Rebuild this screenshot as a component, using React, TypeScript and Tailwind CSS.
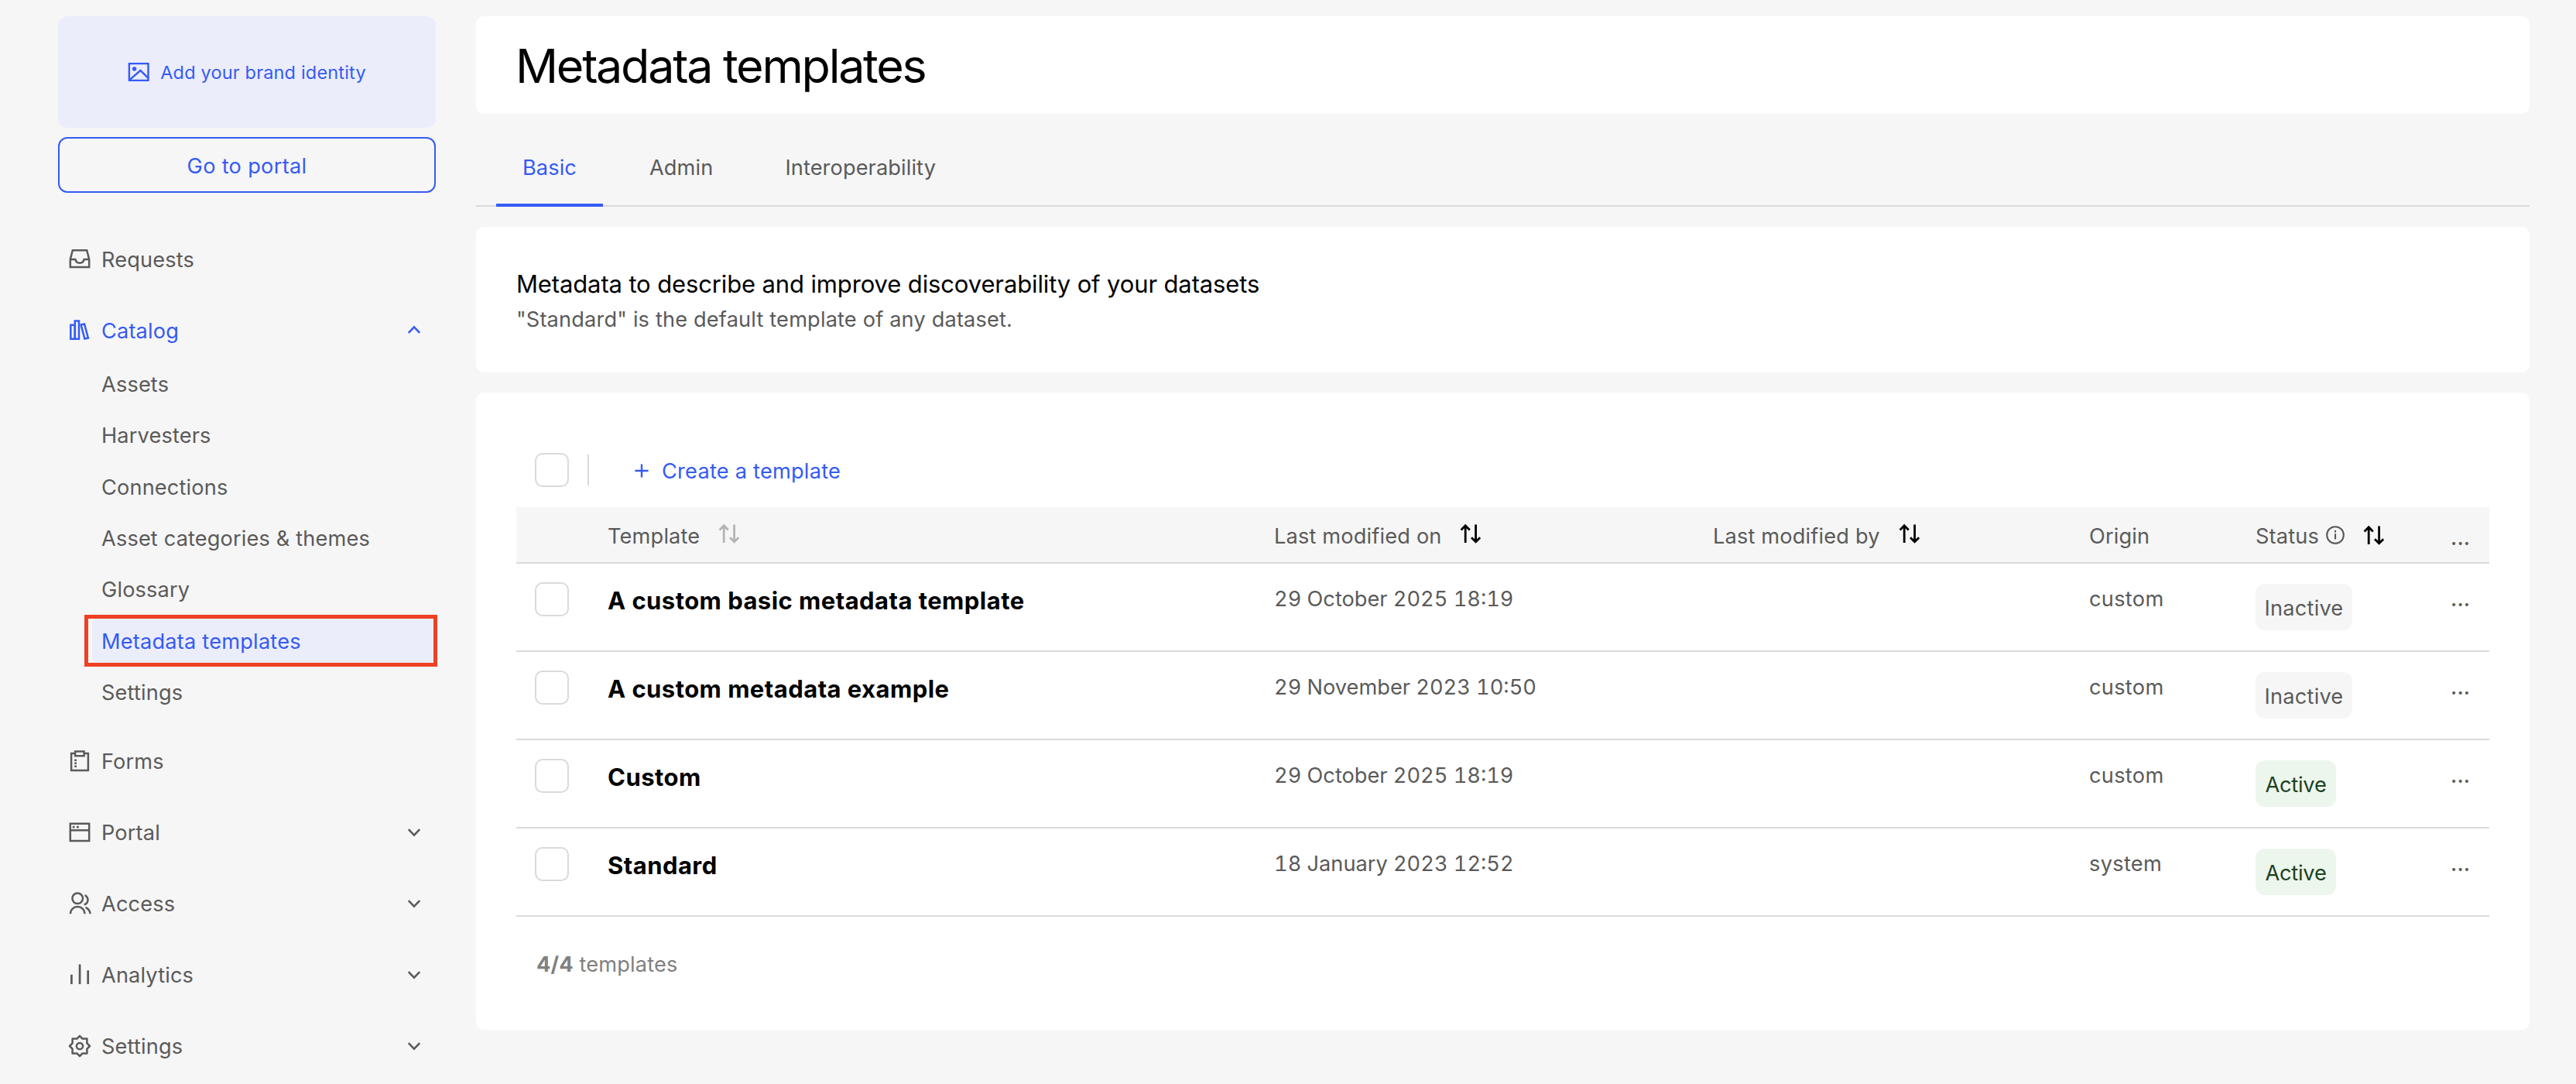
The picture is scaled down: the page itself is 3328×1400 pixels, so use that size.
import { ReactNode } from 'react';

interface NavEntry {
  label: string;
  icon: ReactNode;
  expandable?: boolean;
}

interface Template {
  name: string;
  modifiedOn: string;
  origin: string;
  active: boolean;
}

function Icon({ children }: { children: ReactNode }) {
  return (
    <svg className="-mt-1 h-8 w-8 shrink-0" viewBox="0 0 32 32" fill="none" stroke="currentColor" strokeWidth="2.5">
      {children}
    </svg>
  );
}

function InboxIcon() {
  return (
    <Icon>
      <path d="M6.8 5.2H25.2L28.2 17V27H3.8V17Z" />
      <path d="M3.8 17H10.4C11 20 13.2 21.7 16 21.7S21 20 21.6 17H28.2" />
    </Icon>
  );
}

function CatalogIcon() {
  return (
    <Icon>
      <path d="M4.3 9.7H9.8V27.7H4.3Z" />
      <path d="M9.8 4.4H15V27.7H9.8Z" />
      <path d="M17.6 9.4L22 8.4L26.9 26.5L22.4 27.5Z" />
    </Icon>
  );
}

function FormsIcon() {
  return (
    <Icon>
      <path d="M10.1 6.1H5.1V27.9H26.9V6.1H21.6" />
      <path d="M10.1 3.6H21.6V9.2H10.1Z" />
      <path d="M10.6 13.4V24.2" strokeWidth="2.8" strokeDasharray="2.7 1.3" />
    </Icon>
  );
}

function PortalIcon() {
  return (
    <Icon>
      <path d="M3.8 4.8H28.2V26.9H3.8Z" />
      <path d="M3.8 13.3H28.2" />
      <path d="M6.8 9.1H9.5M12 9.1H14.8" strokeWidth="2.6" />
    </Icon>
  );
}

function AccessIcon() {
  return (
    <Icon>
      <circle cx="13.2" cy="9.3" r="6.8" />
      <path d="M3.9 29.3A9.3 9.3 0 0 1 22.5 29.3" />
      <path d="M22.6 5.2C28.2 8.4 27.6 16 21.6 17.4" />
      <path d="M23.6 20.8C27 22.6 29.4 25.8 29.6 29.3" />
    </Icon>
  );
}

function AnalyticsIcon() {
  return (
    <Icon>
      <path d="M5.4 15.7V28M16.1 2.5V28M26.7 10.3V28" strokeWidth="2.7" />
    </Icon>
  );
}

function SettingsIcon() {
  return (
    <Icon>
      <path
        d="M16 3L19.6 6.6H25.4V12.4L29 16L25.4 19.6V25.4H19.6L16 29L12.4 25.4H6.6V19.6L3 16L6.6 12.4V6.6H12.4Z"
        strokeLinejoin="round"
      />
      <circle cx="16" cy="16" r="4.1" />
    </Icon>
  );
}

function ImageIcon() {
  return (
    <svg className="h-7 w-8" viewBox="0 0 32 28" fill="none" stroke="currentColor" strokeWidth="2.4">
      <path d="M3.9 3.1H28.5V24.9H3.9Z" />
      <path d="M4.5 24.2L18.4 12L28.2 21.6" />
      <circle cx="10.6" cy="10" r="2.7" fill="currentColor" stroke="none" />
    </svg>
  );
}

function Chevron({ up = false }: { up?: boolean }) {
  return (
    <svg className="-mt-1 ml-auto h-6 w-6" viewBox="0 0 24 24" fill="none" stroke="currentColor" strokeWidth="2.6">
      <path d={up ? 'M4.8 15.8L12 8.4L19.2 15.8' : 'M4.8 8.2L12 15.6L19.2 8.2'} />
    </svg>
  );
}

function SortIcon({ className = '-mt-[7px] text-black' }: { className?: string }) {
  return (
    <svg className={`h-7 w-7 ${className}`} viewBox="0 0 28 28" fill="none" stroke="currentColor" strokeWidth="2.8">
      <path d="M7.2 26V4M1.6 9.4L7.2 3.8L12.8 9.4" />
      <path d="M20.6 2.6V24.6M15 19.2L20.6 24.8L26.2 19.2" />
    </svg>
  );
}

function InfoIcon() {
  return (
    <svg className="-mt-1 h-6 w-6" viewBox="0 0 24 24" fill="none" stroke="currentColor" strokeWidth="2.1">
      <circle cx="12" cy="12" r="10.8" />
      <path d="M12 10.2V17.6M12 6V8.4" />
    </svg>
  );
}

function Checkbox() {
  return <div className="h-11 w-11 rounded-[10px] border-2 border-[#dadada] bg-white"></div>;
}

const catalogPages = [
  'Assets',
  'Harvesters',
  'Connections',
  'Asset categories & themes',
  'Glossary',
  'Metadata templates',
  'Settings',
];

const sections: NavEntry[] = [
  { label: 'Forms', icon: <FormsIcon /> },
  { label: 'Portal', icon: <PortalIcon />, expandable: true },
  { label: 'Access', icon: <AccessIcon />, expandable: true },
  { label: 'Analytics', icon: <AnalyticsIcon />, expandable: true },
  { label: 'Settings', icon: <SettingsIcon />, expandable: true },
];

const templates: Template[] = [
  { name: 'A custom basic metadata template', modifiedOn: '29 October 2025 18:19', origin: 'custom', active: false },
  { name: 'A custom metadata example', modifiedOn: '29 November 2023 10:50', origin: 'custom', active: false },
  { name: 'Custom', modifiedOn: '29 October 2025 18:19', origin: 'custom', active: true },
  { name: 'Standard', modifiedOn: '18 January 2023 12:52', origin: 'system', active: true },
];

const columns = 'grid grid-cols-[118px_861px_567px_486px_215px_252px_1fr]';

function NavRow({ label, icon, expandable }: NavEntry) {
  return (
    <div className="flex h-[92px] items-center gap-3 pr-4 pl-3">
      {icon}
      <span>{label}</span>
      {expandable && <Chevron />}
    </div>
  );
}

function Sidebar() {
  return (
    <aside className="w-[488px] shrink-0">
      <div className="flex h-36 items-center justify-center gap-3 rounded-xl bg-[#ebedfb] pr-[2px] text-[23.5px] tracking-[0.18px] text-[#355bf5]">
        <ImageIcon />
        <span className="pt-[1px]">Add your brand identity</span>
      </div>
      <button className="mt-3 h-[72px] w-full rounded-xl border-2 border-[#355bf5] pt-1 tracking-[0.3px] text-[#355bf5]">
        Go to portal
      </button>

      <nav className="mt-[41px] tracking-[0.14px]">
        <NavRow label="Requests" icon={<InboxIcon />} />
        <div className="flex h-[92px] items-center gap-3 pr-4 pl-3 text-[#355bf5]">
          <CatalogIcon />
          <span>Catalog</span>
          <Chevron up />
        </div>
        <ul className="-mt-[10px] mb-[10px]">
          {catalogPages.map((page) =>
            page === 'Metadata templates' ? (
              <li key={page} className="relative flex h-[66.4px] items-center pl-11 tracking-[0.2px] text-[#355bf5]">
                <div className="-mt-1 flex h-[58px] flex-1 items-center rounded-lg bg-[#ebedfb] pt-1 pl-3">{page}</div>
                <div className="absolute -top-[2px] -right-[2px] left-[34px] h-[67px] border-[5px] border-[#ee4023]"></div>
              </li>
            ) : (
              <li key={page} className="flex h-[66.4px] items-center pl-14">
                {page}
              </li>
            ),
          )}
        </ul>
        {sections.map((section) => (
          <NavRow key={section.label} {...section} />
        ))}
      </nav>
    </aside>
  );
}

function Tabs() {
  return (
    <div className="flex h-[120px] gap-[27px] border-b-2 border-[#dadada] pl-[26px] tracking-[0.1px]">
      <div className="-mb-[2px] flex w-[138px] items-center justify-center border-b-4 border-[#355bf5] pt-6 text-[#355bf5]">
        Basic
      </div>
      <div className="flex items-center px-[33px] pt-[22px]">Admin</div>
      <div className="flex items-center px-[33px] pt-[22px]">Interoperability</div>
    </div>
  );
}

function TemplateRow({ template }: { template: Template }) {
  return (
    <div className={`${columns} h-[114px] border-b-2 border-[#dadada] leading-[44px]`}>
      <div className="pt-6 pl-6">
        <Checkbox />
      </div>
      <div className="pt-[26px] text-[31px] font-bold tracking-[0.45px] text-black">{template.name}</div>
      <div className="pt-6 tracking-[0px] tabular-nums">{template.modifiedOn}</div>
      <div></div>
      <div className="pt-6 tracking-[0.3px]">{template.origin}</div>
      <div className="pt-[26px]">
        {template.active ? (
          <div className="flex h-[60px] w-[104px] items-center justify-center rounded-xl bg-[#ecf6ed] pt-[3px] tracking-[-0.2px] text-[#1c421e]">
            Active
          </div>
        ) : (
          <div className="flex h-[60px] w-[125px] items-center justify-center rounded-xl bg-[#f6f6f6] pt-[3px] tracking-[0.2px]">
            Inactive
          </div>
        )}
      </div>
      <div className="pt-6 font-medium">...</div>
    </div>
  );
}

function TemplateTable() {
  return (
    <section className="mt-[26px] h-[823px] rounded-[10px] bg-white px-[52px] pt-[78px]">
      <div className="flex h-[70px] items-start pl-6">
        <Checkbox />
        <div className="mt-[2px] ml-6 h-10 w-[2px] bg-[#dadada]"></div>
        <button className="ml-14 flex h-12 items-center gap-[14px] tracking-[0.22px] text-[#355bf5]">
          <svg className="-mt-[3px] h-6 w-6" viewBox="0 0 24 24" fill="none" stroke="currentColor" strokeWidth="2.4">
            <path d="M3.4 12H20.6M12 3.4V20.6" />
          </svg>
          <span>Create a template</span>
        </button>
      </div>

      <div className={`${columns} h-[73px] items-center border-b-2 border-[#dadada] bg-[#f6f6f6] pt-[5px] tracking-[0.16px]`}>
        <div></div>
        <div className="flex items-center gap-6">
          Template
          <SortIcon className="-mt-[7px] text-[#b4b4b4]" />
        </div>
        <div className="flex items-center gap-[23px]">
          Last modified on
          <SortIcon />
        </div>
        <div className="flex items-center gap-6">
          Last modified by
          <SortIcon />
        </div>
        <div>Origin</div>
        <div className="flex items-center">
          <span className="mr-[9px]">Status</span>
          <InfoIcon />
          <SortIcon className="-mt-1 ml-6 text-black" />
        </div>
        <div className="pt-1 font-medium">...</div>
      </div>

      {templates.map((template) => (
        <TemplateRow key={template.name} template={template} />
      ))}

      <p className="pt-10 pl-[26px] leading-[44px] tracking-[0.14px] text-[#808080]">
        <strong className="font-bold">4/4</strong> templates
      </p>
    </section>
  );
}

export default function App() {
  return (
    <div className="flex h-[1400px] w-[3328px] gap-[52px] overflow-hidden bg-[#f6f6f6] pt-[21px] pr-[60px] pl-[75px] font-[Inter,sans-serif] text-[27.2px] tracking-[0.16px] text-[#5a5a5a]">
      <Sidebar />
      <main className="flex-1">
        <header className="flex h-[126px] items-center rounded-[10px] bg-white pt-1 pl-[51px]">
          <h1 className="text-[61px] tracking-[-2.27px] text-black">Metadata templates</h1>
        </header>
        <Tabs />
        <section className="mt-[26px] h-[188px] rounded-[10px] bg-white pt-[51px] pl-[52px] leading-[45px]">
          <h2 className="text-[31px] tracking-[-0.13px] text-black">
            Metadata to describe and improve discoverability of your datasets
          </h2>
          <p className="pt-[1px]">"Standard" is the default template of any dataset.</p>
        </section>
        <TemplateTable />
      </main>
    </div>
  );
}
